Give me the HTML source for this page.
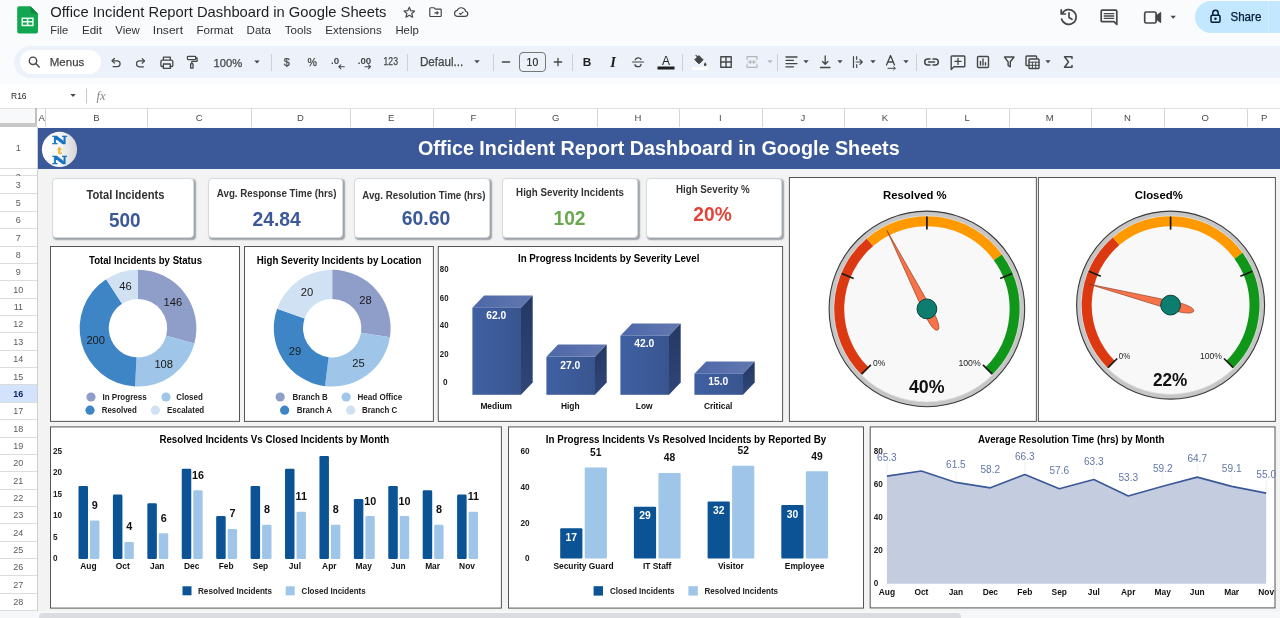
<!DOCTYPE html>
<html lang="en"><head><meta charset="utf-8">
<title>Office Incident Report Dashboard in Google Sheets</title>
<style>
html,body{margin:0;padding:0;}
body{width:1280px;height:618px;overflow:hidden;background:#f9fbfd;font-family:"Liberation Sans",Arial,sans-serif;position:relative;color:#1f1f1f;}
.abs{position:absolute;}
#toolbar{left:14px;top:46px;width:1290px;height:32px;border-radius:16px;background:#edf2fa;}
#menus-pill{left:20px;top:50px;width:81px;height:24px;border-radius:12px;background:#fff;}
.sep{top:54px;width:1px;height:17px;background:#ccd0d6}
#fbar{left:0;top:84px;width:1280px;height:24px;background:#fff;}
#colhdr{left:0;top:108px;width:1280px;height:19px;background:#fff;border-top:1px solid #e1e1e1;box-sizing:border-box}
.ch{top:109px;height:18px;border-right:1px solid #d5d5d5;box-sizing:border-box}
#rowhdr{left:0;top:127px;width:38px;height:491px;background:#fbfbfc;border-right:1px solid #d0d0d0;box-sizing:border-box}
.rh{left:0;width:37px;background:#fff;border-bottom:1px solid #dcdcdc;box-sizing:border-box}
#banner{left:38px;top:127.5px;width:1242px;height:41px;background:#3b5998;}
#sheetbg{left:38px;top:168px;width:1242px;height:443px;background:#f3f3f3}
.kpi{background:#fff;border:1px solid #d3dbe0;border-radius:4px;box-shadow:1.5px 1.5px 1.5px rgba(70,80,90,.5);box-sizing:border-box}
.box{background:#fff;border:1px solid #4a4a4a;box-sizing:border-box}
#hscroll{left:0;top:611px;width:1280px;height:7px;background:#f6f7f8}
#hthumb{left:38.500px;top:613px;width:922px;height:9px;background:#dadce0;border-radius:4px}
svg text{font-family:"Liberation Sans",Arial,sans-serif}
svg text.slab{font-family:"DejaVu Serif","Liberation Serif",serif}
svg text.serif{font-family:"Liberation Serif","DejaVu Serif",serif}
</style></head><body>

<svg class="abs" style="left:17px;top:5.500px" width="22" height="28" viewBox="0 0 22 28">
<path d="M2.200 0.300h11.300l7.500 7.500v17.700a2 2 0 0 1-2 2h-16.800a2 2 0 0 1-2-2v-23.200a2 2 0 0 1 2-2z" fill="#11a650"/>
<path d="M13.500 0.300l7.500 7.500h-5.500a2 2 0 0 1-2-2z" fill="#0c8a40"/>
<path d="M4.500 11.400h12.200v8.900h-12.200z M6 12.900v2.100h3.800v-2.100z M11.400 12.900v2.100h3.800v-2.100z M6 16.500v2.300h3.800v-2.300z M11.400 16.500v2.300h3.800v-2.300z" fill="#e9f7ee" fill-rule="evenodd"/>
</svg>
<svg class="abs" style="left:401px;top:4px" width="70" height="18" viewBox="0 0 70 18" fill="none" stroke="#444746" stroke-width="1.300" stroke-linejoin="round">
<g transform="translate(8.300 8.200) scale(.9) translate(-8.200 -8.200)"><path d="M8.200 2.600l1.700 3.900 4.200.4-3.200 2.800 1 4.100-3.700-2.200-3.700 2.200 1-4.100-3.200-2.800 4.200-.4z"/></g>
<g transform="translate(34.600 8.100) scale(.92 .86) translate(-33.800 -8.500)">
<path d="M28.400 3.500h3.800l1.400 1.500h5.400a.9.900 0 0 1 .9.900v6.800a.9.900 0 0 1-.9.900h-10.600a.9.900 0 0 1-.9-.9v-8.300a.9.900 0 0 1 .9-.9z"/>
<path d="M32.500 9.400h3.600M35 7.700l1.700 1.700-1.700 1.700" stroke-width="1.200"/></g>
<g transform="translate(60.400 8.200) scale(.93 .86) translate(-60.200 -8.400)">
<path d="M55.800 13.200h8.400a3 3 0 0 0 .4-5.950 4.600 4.600 0 0 0-8.900-.95 3.500 3.500 0 0 0 .1 6.900z"/>
<path d="M57.700 9.400l1.600 1.600 3-3.100" stroke-width="1.200"/></g>
</svg>
<svg class="abs" style="left:1055px;top:3px" width="130" height="28" viewBox="0 0 130 28" fill="none" stroke="#444746" stroke-width="1.700" stroke-linecap="round" stroke-linejoin="round">
<path d="M7.200 10.500a7.400 7.400 0 1 1-.6 5.500"/><path d="M6.200 6.800v4.200h4.200" /><path d="M14 9.800v4.700l3 1.800"/>
<path d="M47.200 7.200h13.600a1 1 0 0 1 1 1v13.300l-2.800-2.800h-11.800a1 1 0 0 1-1-1v-9.500a1 1 0 0 1 1-1z" /><path d="M49.200 10.700h9.600M49.200 13h9.600M49.200 15.300h9.600" stroke-width="1.300"/>
<path d="M91.300 9h8.200a1.600 1.600 0 0 1 1.600 1.600v7.800a1.600 1.600 0 0 1-1.600 1.600h-8.200a1.600 1.600 0 0 1-1.600-1.600v-7.800a1.600 1.600 0 0 1 1.600-1.600z"/><path d="M101.300 13l4.300-3.300v9.600l-4.300-3.300z" fill="#444746" stroke-width="1.200"/>
<path d="M115.500 12.800h5.400l-2.700 3z" fill="#444746" stroke="none"/>
</svg>
<div class="abs" style="left:1195px;top:1px;width:120px;height:32px;border-radius:16px;background:#c2e7ff"></div>
<svg class="abs" style="left:1208px;top:8px" width="14" height="17" viewBox="0 0 14 17"><path d="M4.800 7.200v-2.200a2.700 2.700 0 0 1 5.400 0v2.200" fill="none" stroke="#001d35" stroke-width="1.500"/><rect x="3" y="7.200" width="9" height="7" rx="1.200" fill="none" stroke="#001d35" stroke-width="1.500"/><circle cx="7.500" cy="10.700" r="1.200" fill="#001d35"/></svg>
<div class="abs" style="left:1268px;top:1px;width:1px;height:32px;background:#d3edff"></div>

<div id="toolbar" class="abs"></div><div id="menus-pill" class="abs"></div>
<svg class="abs" style="left:0;top:46px" width="1280" height="32" viewBox="0 46 1280 32" fill="none" stroke="#444746" stroke-width="1.400" stroke-linecap="round" stroke-linejoin="round">
<circle cx="33" cy="60.800" r="3.700"/><path d="M35.800 63.600l3.400 3.500"/>
<g transform="translate(116 62.600) scale(.88) translate(-116.300 -62.050)"><path d="M112.300 60h5.300a3.300 3.300 0 0 1 0 6.700h-4.600"/><path d="M114.500 57.400l-2.700 2.600 2.700 2.600"/></g>
<g transform="translate(140.600 62.700) scale(.88) translate(-139.700 -62.050)"><path d="M143.700 60h-5.300a3.300 3.300 0 0 0 0 6.700h4.600" /><path d="M141.500 57.400l2.700 2.600-2.700 2.600"/></g>
<g transform="translate(166.800 62.800) scale(.93) translate(-166.450 -62.400)"><path d="M162.800 59.600v-3.200h7.400v3.200M162.800 66.400h-1.700a1 1 0 0 1-1-1v-4.300a1.500 1.500 0 0 1 1.500-1.500h9.800a1.500 1.500 0 0 1 1.500 1.500v4.300a1 1 0 0 1-1 1h-1.700"/><rect x="162.800" y="63.700" width="7.400" height="4.700"/></g>
<g transform="translate(192.250 62.250) scale(.92) translate(-192.750 -62.300)"><rect x="187.500" y="55.800" width="9" height="3.600" rx=".8"/><path d="M196.500 57.600h1.500v3.700h-5.700v2.500"/><rect x="191" y="63.800" width="2.600" height="5" rx=".6"/></g>
<path d="M254.300 60.600h5.400l-2.700 3z" fill="#444746" stroke="none"/>
<path d="M344.300 66.700h-5.500M340.800 64.800l-2 1.900 2 1.900" stroke-width="1.100"/>
<path d="M365 66.700h5.500M368.500 64.800l2 1.900-2 1.900" stroke-width="1.100"/>
<path d="M474.300 60.300h5.400l-2.700 3z" fill="#444746" stroke="none"/>
<path d="M502.300 62h7.400M554.300 62h7.400M558 58.300v7.400" stroke-width="1.300"/>
<rect x="519.500" y="52.500" width="26" height="19" rx="3.500" stroke="#747775" stroke-width="1"/>
<path d="M632.500 62h11" stroke-width="1.200"/><path d="M641 59.400a3 2.200 0 0 0-5.800.4M635 64.600a3 2.200 0 0 0 6-.3" stroke-width="1.300"/>
<rect x="657.500" y="66.500" width="17" height="3" fill="#1f1f1f" stroke="none"/>
<path d="M695.300 59.200l3.600-3.600 4.200 4.200-3.600 3.600a.8.800 0 0 1-1.100 0l-3.100-3.100a.8.800 0 0 1 0-1.100z" fill="#444746" stroke-width="1"/><path d="M696 55.300l2.800 2.800" stroke-width="1.200"/><path d="M705.200 62.200c.8 1.200 1.300 1.900 1.300 2.600a1.300 1.300 0 0 1-2.600 0c0-.7.500-1.400 1.300-2.600z" fill="#444746" stroke="none"/>
<rect x="692" y="67.200" width="16" height="2.800" fill="#fff" stroke="none"/>
<rect x="720.800" y="56.800" width="10.400" height="10.400"/><path d="M726 56.800v10.400M720.800 62h10.400"/>
<g stroke="#b4b7ba"><path d="M747 59.500v-2.800h10v2.800M747 64.500v2.800h10v-2.800M748 62h3M756 62h-3M750 60.700l1.300 1.300-1.300 1.300M754 60.700l-1.300 1.300 1.300 1.300" stroke-width="1.200"/><path d="M767.300 60.300h5.400l-2.700 3z" fill="#b4b7ba" stroke="none"/></g>
<path d="M786 57h11M786 60.300h7.500M786 63.600h11M786 66.900h7.500" stroke-width="1.300"/><path d="M803.300 60.300h5.400l-2.700 3z" fill="#444746" stroke="none"/>
<path d="M820.500 67.500h9.500M825.200 56v8M822.500 61.500l2.700 2.700 2.700-2.700" stroke-width="1.300"/><path d="M837.300 60.300h5.400l-2.700 3z" fill="#444746" stroke="none"/>
<path d="M853.500 56.500v11M856.700 56.500v3M856.700 64.500v3M856 62h6.300M859.900 59.600l2.400 2.400-2.400 2.400" stroke-width="1.200"/><path d="M870.300 60.300h5.400l-2.700 3z" fill="#444746" stroke="none"/>
<path d="M886.500 65l4-9.500 4 9.500M888 62h5" stroke-width="1.300"/><path d="M888 68.300h7M893.700 66.900l1.600 1.400-1.600 1.400" stroke-width="1"/><path d="M903.300 60.300h5.400l-2.700 3z" fill="#444746" stroke="none"/>
<path d="M930 59h-2.300a3 3 0 0 0 0 6h2.300M933 59h2.300a3 3 0 0 1 0 6h-2.300M928.500 62h6" stroke-width="1.500"/>
<path d="M952 56h12a.8.800 0 0 1 .8.800v9.200a.8.800 0 0 1-.8.800h-10l-2.800 2.700v-12.700a.8.800 0 0 1 .8-.8z"/><path d="M955 61.400h6M958 58.400v6" stroke-width="1.300"/>
<rect x="977.500" y="56.500" width="11" height="11" rx="1"/><path d="M980.500 65v-3.500M983 65v-6M985.500 65v-2.300" stroke-width="1.400"/>
<path d="M1004.500 57h9.500l-3.700 4.800v5l-2.200-1.300v-3.700z"/>
<path d="M1028 65.500h-1.200a.8.800 0 0 1-.8-.8v-7.900a.8.800 0 0 1 .8-.8h9a.8.800 0 0 1 .8.800v1.300"/><rect x="1029" y="59" width="10" height="9.500" rx=".8"/><path d="M1029 62.200h10M1029 65.300h10M1032.400 62.200v6.300M1035.700 62.200v6.300" stroke-width="1"/><path d="M1045.300 60.300h5.400l-2.700 3z" fill="#444746" stroke="none"/>
<path d="M1072 58.500v-1.800h-7.500l4 5.300-4 5.300h7.500v-1.800" stroke-width="1.500"/>
</svg>
<div class="abs sep" style="left:271px"></div>
<div class="abs sep" style="left:407px"></div>
<div class="abs sep" style="left:492.5px"></div>
<div class="abs sep" style="left:572px"></div>
<div class="abs sep" style="left:682px"></div>
<div class="abs sep" style="left:777px"></div>
<div class="abs sep" style="left:916px"></div>
<div id="fbar" class="abs"></div>
<svg class="abs" style="left:60px;top:84px" width="60" height="24" viewBox="60 84 60 24"><path d="M70.300 94h5.400l-2.700 3z" fill="#444746"/><path d="M86.500 88.500v15" stroke="#c7c7c7" stroke-width="1"/></svg>

<div id="colhdr" class="abs"></div>
<div class="abs ch" style="left:37px;width:9.299999999999997px"></div>
<div class="abs ch" style="left:46.3px;width:102.2px"></div>
<div class="abs ch" style="left:148.5px;width:103.5px"></div>
<div class="abs ch" style="left:252px;width:99px"></div>
<div class="abs ch" style="left:351px;width:82.5px"></div>
<div class="abs ch" style="left:433.5px;width:82.0px"></div>
<div class="abs ch" style="left:515.5px;width:82.5px"></div>
<div class="abs ch" style="left:598px;width:82px"></div>
<div class="abs ch" style="left:680px;width:82.5px"></div>
<div class="abs ch" style="left:762.5px;width:82.5px"></div>
<div class="abs ch" style="left:845px;width:82px"></div>
<div class="abs ch" style="left:927px;width:82.5px"></div>
<div class="abs ch" style="left:1009.5px;width:82.5px"></div>
<div class="abs ch" style="left:1092px;width:73px"></div>
<div class="abs ch" style="left:1165px;width:82.5px"></div>
<div class="abs ch" style="left:1247.5px;width:82.5px"></div>
<div class="abs" style="left:0;top:109px;width:37px;height:18px;background:#f8f9fa;border-right:1px solid #d5d5d5;box-sizing:border-box"></div>
<div class="abs" style="left:34.500px;top:108px;width:2.500px;height:19px;background:#c0c0c0"></div><div class="abs" style="left:0;top:123px;width:37px;height:3.700px;background:#c8c8c8"></div>
<div id="rowhdr" class="abs"></div>
<div class="abs rh" style="top:127.00px;height:42.10px;"></div>
<div class="abs rh" style="top:169.10px;height:7.30px;"></div>
<div class="abs rh" style="top:176.40px;height:18.10px;"></div>
<div class="abs rh" style="top:194.50px;height:17.36px;"></div>
<div class="abs rh" style="top:211.86px;height:17.36px;"></div>
<div class="abs rh" style="top:229.22px;height:17.36px;"></div>
<div class="abs rh" style="top:246.58px;height:17.36px;"></div>
<div class="abs rh" style="top:263.94px;height:17.36px;"></div>
<div class="abs rh" style="top:281.30px;height:17.36px;"></div>
<div class="abs rh" style="top:298.66px;height:17.36px;"></div>
<div class="abs rh" style="top:316.02px;height:17.36px;"></div>
<div class="abs rh" style="top:333.38px;height:17.36px;"></div>
<div class="abs rh" style="top:350.74px;height:17.36px;"></div>
<div class="abs rh" style="top:368.10px;height:17.36px;"></div>
<div class="abs rh" style="top:385.46px;height:17.36px;background:#d3e3fd;"></div>
<div class="abs rh" style="top:402.82px;height:17.36px;"></div>
<div class="abs rh" style="top:420.18px;height:17.36px;"></div>
<div class="abs rh" style="top:437.54px;height:17.36px;"></div>
<div class="abs rh" style="top:454.90px;height:17.36px;"></div>
<div class="abs rh" style="top:472.26px;height:17.36px;"></div>
<div class="abs rh" style="top:489.62px;height:17.36px;"></div>
<div class="abs rh" style="top:506.98px;height:17.36px;"></div>
<div class="abs rh" style="top:524.34px;height:17.36px;"></div>
<div class="abs rh" style="top:541.70px;height:17.36px;"></div>
<div class="abs rh" style="top:559.06px;height:17.36px;"></div>
<div class="abs rh" style="top:576.42px;height:17.36px;"></div>
<div class="abs rh" style="top:593.78px;height:17.36px;"></div>
<div id="sheetbg" class="abs"></div><div id="banner" class="abs"></div>
<div class="abs kpi" style="left:51.5px;top:177.5px;width:142.5px;height:60.5px"></div>
<div class="abs kpi" style="left:208.3px;top:177.5px;width:134.7px;height:60.5px"></div>
<div class="abs kpi" style="left:354.3px;top:177.5px;width:136px;height:60.5px"></div>
<div class="abs kpi" style="left:502.2px;top:177.5px;width:135.5px;height:60.5px"></div>
<div class="abs kpi" style="left:646.3px;top:177.5px;width:135.5px;height:60.5px"></div>
<svg class="abs" style="left:0;top:0" width="1280" height="618" viewBox="0 0 1280 618">
<rect x="50.5" y="246.5" width="189.00" height="174.90" fill="#fff" stroke="#555" stroke-width="1"/>
<rect x="244.5" y="246.5" width="188.90" height="174.90" fill="#fff" stroke="#555" stroke-width="1"/>
<rect x="438.3" y="246.5" width="344.30" height="174.90" fill="#fff" stroke="#555" stroke-width="1"/>
<rect x="789.4" y="177.5" width="246.95" height="243.90" fill="#fff" stroke="#555" stroke-width="1"/>
<rect x="1038.4" y="177.5" width="237.00" height="243.90" fill="#fff" stroke="#555" stroke-width="1"/>
<rect x="50.5" y="426.9" width="450.90" height="181.20" fill="#fff" stroke="#555" stroke-width="1"/>
<rect x="508.5" y="426.9" width="355.00" height="181.20" fill="#fff" stroke="#555" stroke-width="1"/>
<rect x="870.2" y="426.9" width="404.80" height="181.00" fill="#fff" stroke="#555" stroke-width="1"/>
</svg>
<svg class="abs" style="left:0;top:0;will-change:transform" width="1280" height="618" viewBox="0 0 1280 618">
<defs><linearGradient id="g3f" x1="0" y1="0" x2="1" y2="0"><stop offset="0" stop-color="#3f60a2"/><stop offset="1" stop-color="#39558f"/></linearGradient><linearGradient id="g3t" x1="0" y1="0" x2="1" y2="0"><stop offset="0" stop-color="#4d68a8"/><stop offset="1" stop-color="#6278b0"/></linearGradient><linearGradient id="g3s" x1="0" y1="0" x2="0" y2="1"><stop offset="0" stop-color="#243863"/><stop offset="1" stop-color="#2f4678"/></linearGradient><linearGradient id="lg" x1="0" y1="0" x2="1" y2="0"><stop offset="0" stop-color="#ffffff"/><stop offset=".5" stop-color="#f6f6f6"/><stop offset="1" stop-color="#d4d4d6"/></linearGradient></defs>
<text x="50.30" y="17.30" font-size="14.8" font-weight="normal" fill="#1f1f1f" text-anchor="start" textLength="336.20" lengthAdjust="spacingAndGlyphs" >Office Incident Report Dashboard in Google Sheets</text>
<text x="50.30" y="33.88" font-size="11.4" font-weight="normal" fill="#303030" text-anchor="start" textLength="17.90" lengthAdjust="spacingAndGlyphs" >File</text>
<text x="81.90" y="33.88" font-size="11.4" font-weight="normal" fill="#303030" text-anchor="start" textLength="20.00" lengthAdjust="spacingAndGlyphs" >Edit</text>
<text x="115.30" y="33.88" font-size="11.4" font-weight="normal" fill="#303030" text-anchor="start" textLength="24.40" lengthAdjust="spacingAndGlyphs" >View</text>
<text x="152.80" y="33.88" font-size="11.4" font-weight="normal" fill="#303030" text-anchor="start" textLength="30.20" lengthAdjust="spacingAndGlyphs" >Insert</text>
<text x="196.40" y="33.88" font-size="11.4" font-weight="normal" fill="#303030" text-anchor="start" textLength="36.80" lengthAdjust="spacingAndGlyphs" >Format</text>
<text x="246.60" y="33.88" font-size="11.4" font-weight="normal" fill="#303030" text-anchor="start" textLength="24.40" lengthAdjust="spacingAndGlyphs" >Data</text>
<text x="284.80" y="33.88" font-size="11.4" font-weight="normal" fill="#303030" text-anchor="start" textLength="27.10" lengthAdjust="spacingAndGlyphs" >Tools</text>
<text x="325.30" y="33.88" font-size="11.4" font-weight="normal" fill="#303030" text-anchor="start" textLength="56.40" lengthAdjust="spacingAndGlyphs" >Extensions</text>
<text x="395.40" y="33.88" font-size="11.4" font-weight="normal" fill="#303030" text-anchor="start" textLength="23.40" lengthAdjust="spacingAndGlyphs" >Help</text>
<text x="1230.40" y="21.17" font-size="12.2" font-weight="normal" fill="#001d35" text-anchor="start" textLength="31.00" lengthAdjust="spacingAndGlyphs" stroke="#001d35" stroke-width=".25">Share</text>
<text x="49.80" y="66.22" font-size="11.8" font-weight="normal" fill="#444746" text-anchor="start" textLength="34.50" lengthAdjust="spacingAndGlyphs" stroke="#444746" stroke-width=".25">Menus</text>
<text x="213.40" y="66.52" font-size="11.8" font-weight="normal" fill="#444746" text-anchor="start" textLength="28.80" lengthAdjust="spacingAndGlyphs" stroke="#444746" stroke-width=".25">100%</text>
<text x="286.70" y="65.87" font-size="10.8" font-weight="normal" fill="#444746" text-anchor="middle" stroke="#444746" stroke-width=".25">$</text>
<text x="312.30" y="65.59" font-size="10.6" font-weight="normal" fill="#444746" text-anchor="middle" stroke="#444746" stroke-width=".25">%</text>
<text x="331.10" y="63.57" font-size="9.4" font-weight="bold" fill="#444746" text-anchor="start" textLength="8.10" lengthAdjust="spacingAndGlyphs" >.0</text>
<text x="357.70" y="63.57" font-size="9.4" font-weight="bold" fill="#444746" text-anchor="start" textLength="13.50" lengthAdjust="spacingAndGlyphs" >.00</text>
<text x="383.60" y="65.45" font-size="10.2" font-weight="normal" fill="#444746" text-anchor="start" textLength="14.30" lengthAdjust="spacingAndGlyphs" stroke="#444746" stroke-width=".25">123</text>
<text x="420.00" y="66.10" font-size="12" font-weight="normal" fill="#444746" text-anchor="start" textLength="43.20" lengthAdjust="spacingAndGlyphs" stroke="#444746" stroke-width=".25">Defaul...</text>
<text x="526.60" y="65.92" font-size="11.5" font-weight="normal" fill="#1f1f1f" text-anchor="start" textLength="11.60" lengthAdjust="spacingAndGlyphs" stroke="#1f1f1f" stroke-width=".2">10</text>
<text x="587.00" y="66.22" font-size="11.8" font-weight="bold" fill="#1f1f1f" text-anchor="middle" >B</text>
<text x="613.00" y="67.19" font-size="14.5" font-weight="bold" fill="#1f1f1f" text-anchor="middle" class="serif" font-style="italic">I</text>
<text x="666.00" y="64.50" font-size="12" font-weight="normal" fill="#1f1f1f" text-anchor="middle" >A</text>
<text x="11.00" y="98.91" font-size="9.8" font-weight="normal" fill="#1f1f1f" text-anchor="start" textLength="15.60" lengthAdjust="spacingAndGlyphs" >R16</text>
<text x="101.00" y="100.07" font-size="12.5" font-weight="normal" fill="#80868b" text-anchor="middle" class="serif" font-style="italic">fx</text>
<text x="41.65" y="121.20" font-size="9.5" font-weight="normal" fill="#4a4a4a" text-anchor="middle" >A</text>
<text x="96.40" y="121.20" font-size="9.5" font-weight="normal" fill="#4a4a4a" text-anchor="middle" >B</text>
<text x="199.25" y="121.20" font-size="9.5" font-weight="normal" fill="#4a4a4a" text-anchor="middle" >C</text>
<text x="300.50" y="121.20" font-size="9.5" font-weight="normal" fill="#4a4a4a" text-anchor="middle" >D</text>
<text x="391.25" y="121.20" font-size="9.5" font-weight="normal" fill="#4a4a4a" text-anchor="middle" >E</text>
<text x="473.50" y="121.20" font-size="9.5" font-weight="normal" fill="#4a4a4a" text-anchor="middle" >F</text>
<text x="555.75" y="121.20" font-size="9.5" font-weight="normal" fill="#4a4a4a" text-anchor="middle" >G</text>
<text x="638.00" y="121.20" font-size="9.5" font-weight="normal" fill="#4a4a4a" text-anchor="middle" >H</text>
<text x="720.25" y="121.20" font-size="9.5" font-weight="normal" fill="#4a4a4a" text-anchor="middle" >I</text>
<text x="802.75" y="121.20" font-size="9.5" font-weight="normal" fill="#4a4a4a" text-anchor="middle" >J</text>
<text x="885.00" y="121.20" font-size="9.5" font-weight="normal" fill="#4a4a4a" text-anchor="middle" >K</text>
<text x="967.25" y="121.20" font-size="9.5" font-weight="normal" fill="#4a4a4a" text-anchor="middle" >L</text>
<text x="1049.75" y="121.20" font-size="9.5" font-weight="normal" fill="#4a4a4a" text-anchor="middle" >M</text>
<text x="1127.50" y="121.20" font-size="9.5" font-weight="normal" fill="#4a4a4a" text-anchor="middle" >N</text>
<text x="1205.25" y="121.20" font-size="9.5" font-weight="normal" fill="#4a4a4a" text-anchor="middle" >O</text>
<text x="1264.25" y="121.20" font-size="9.5" font-weight="normal" fill="#4a4a4a" text-anchor="middle" >P</text>
<text x="18.30" y="151.22" font-size="9" font-weight="normal" fill="#5a5a5a" text-anchor="middle" >1</text>
<svg x="0" y="169.100" width="36" height="6.800" viewBox="0 169.100 36 6.800"><text x="18.30" y="179.62" font-size="9" font-weight="normal" fill="#5a5a5a" text-anchor="middle" >2</text></svg>
<text x="18.30" y="188.17" font-size="9" font-weight="normal" fill="#5a5a5a" text-anchor="middle" >3</text>
<text x="18.30" y="205.90" font-size="9" font-weight="normal" fill="#5a5a5a" text-anchor="middle" >5</text>
<text x="18.30" y="223.26" font-size="9" font-weight="normal" fill="#5a5a5a" text-anchor="middle" >6</text>
<text x="18.30" y="240.62" font-size="9" font-weight="normal" fill="#5a5a5a" text-anchor="middle" >7</text>
<text x="18.30" y="257.98" font-size="9" font-weight="normal" fill="#5a5a5a" text-anchor="middle" >8</text>
<text x="18.30" y="275.34" font-size="9" font-weight="normal" fill="#5a5a5a" text-anchor="middle" >9</text>
<text x="18.30" y="292.70" font-size="9" font-weight="normal" fill="#5a5a5a" text-anchor="middle" >10</text>
<text x="18.30" y="310.06" font-size="9" font-weight="normal" fill="#5a5a5a" text-anchor="middle" >11</text>
<text x="18.30" y="327.42" font-size="9" font-weight="normal" fill="#5a5a5a" text-anchor="middle" >12</text>
<text x="18.30" y="344.78" font-size="9" font-weight="normal" fill="#5a5a5a" text-anchor="middle" >13</text>
<text x="18.30" y="362.14" font-size="9" font-weight="normal" fill="#5a5a5a" text-anchor="middle" >14</text>
<text x="18.30" y="379.50" font-size="9" font-weight="normal" fill="#5a5a5a" text-anchor="middle" >15</text>
<text x="18.30" y="396.86" font-size="9" font-weight="bold" fill="#0b2a66" text-anchor="middle" >16</text>
<text x="18.30" y="414.22" font-size="9" font-weight="normal" fill="#5a5a5a" text-anchor="middle" >17</text>
<text x="18.30" y="431.58" font-size="9" font-weight="normal" fill="#5a5a5a" text-anchor="middle" >18</text>
<text x="18.30" y="448.94" font-size="9" font-weight="normal" fill="#5a5a5a" text-anchor="middle" >19</text>
<text x="18.30" y="466.30" font-size="9" font-weight="normal" fill="#5a5a5a" text-anchor="middle" >20</text>
<text x="18.30" y="483.66" font-size="9" font-weight="normal" fill="#5a5a5a" text-anchor="middle" >21</text>
<text x="18.30" y="501.02" font-size="9" font-weight="normal" fill="#5a5a5a" text-anchor="middle" >22</text>
<text x="18.30" y="518.38" font-size="9" font-weight="normal" fill="#5a5a5a" text-anchor="middle" >23</text>
<text x="18.30" y="535.74" font-size="9" font-weight="normal" fill="#5a5a5a" text-anchor="middle" >24</text>
<text x="18.30" y="553.10" font-size="9" font-weight="normal" fill="#5a5a5a" text-anchor="middle" >25</text>
<text x="18.30" y="570.46" font-size="9" font-weight="normal" fill="#5a5a5a" text-anchor="middle" >26</text>
<text x="18.30" y="587.82" font-size="9" font-weight="normal" fill="#5a5a5a" text-anchor="middle" >27</text>
<text x="18.30" y="605.18" font-size="9" font-weight="normal" fill="#5a5a5a" text-anchor="middle" >28</text>
<text x="417.90" y="155.18" font-size="19.5" font-weight="bold" fill="#fff" text-anchor="start" textLength="481.80" lengthAdjust="spacingAndGlyphs" >Office Incident Report Dashboard in Google Sheets</text>
<circle cx="59.500" cy="149.400" r="17.600" fill="url(#lg)"/>
<text class="slab" x="0" y="0" font-size="10.400" font-weight="bold" fill="#1573c0" stroke="#1573c0" stroke-width=".5" text-anchor="middle" transform="translate(59.600 143.600) scale(1.620 1)">N</text>
<text class="slab" x="0" y="0" font-size="10.400" font-weight="bold" fill="#1573c0" stroke="#1573c0" stroke-width=".5" text-anchor="middle" transform="translate(59.600 163.700) scale(1.620 1)">N</text>
<text class="slab" x="59.700" y="153.600" font-size="9.500" font-weight="bold" fill="#f0b428" stroke="#f0b428" stroke-width=".4" text-anchor="middle">t</text>
<text x="86.40" y="198.60" font-size="12.3" font-weight="bold" fill="#333" text-anchor="start" textLength="78.00" lengthAdjust="spacingAndGlyphs" >Total Incidents</text>
<text x="109.00" y="227.37" font-size="20.3" font-weight="bold" fill="#3b5998" text-anchor="start" textLength="31.60" lengthAdjust="spacingAndGlyphs" >500</text>
<text x="216.80" y="197.26" font-size="10.5" font-weight="bold" fill="#333" text-anchor="start" textLength="119.70" lengthAdjust="spacingAndGlyphs" >Avg. Response Time (hrs)</text>
<text x="252.40" y="225.57" font-size="20.3" font-weight="bold" fill="#3b5998" text-anchor="start" textLength="48.40" lengthAdjust="spacingAndGlyphs" >24.84</text>
<text x="362.30" y="198.96" font-size="10.5" font-weight="bold" fill="#333" text-anchor="start" textLength="123.20" lengthAdjust="spacingAndGlyphs" >Avg. Resolution Time (hrs)</text>
<text x="401.80" y="224.77" font-size="20.3" font-weight="bold" fill="#3b5998" text-anchor="start" textLength="48.50" lengthAdjust="spacingAndGlyphs" >60.60</text>
<text x="516.10" y="196.46" font-size="10.5" font-weight="bold" fill="#333" text-anchor="start" textLength="107.80" lengthAdjust="spacingAndGlyphs" >High Severity Incidents</text>
<text x="553.50" y="224.77" font-size="20.3" font-weight="bold" fill="#6aa84f" text-anchor="start" textLength="32.00" lengthAdjust="spacingAndGlyphs" >102</text>
<text x="676.00" y="193.16" font-size="10.5" font-weight="bold" fill="#333" text-anchor="start" textLength="73.70" lengthAdjust="spacingAndGlyphs" >High Severity %</text>
<text x="693.30" y="221.47" font-size="20.3" font-weight="bold" fill="#e0453a" text-anchor="start" textLength="38.40" lengthAdjust="spacingAndGlyphs" >20%</text>
<text x="89.00" y="263.66" font-size="10.5" font-weight="bold" fill="#000" text-anchor="start" textLength="113.00" lengthAdjust="spacingAndGlyphs" >Total Incidents by Status</text>
<path d="M138.00 269.80A58.4 58.4 0 0 1 194.38 343.43L166.19 335.82A29.2 29.2 0 0 0 138.00 299.00Z" fill="#8f9ec9"/>
<text x="172.78" y="305.58" font-size="11.2" font-weight="normal" fill="#1a1a1a" text-anchor="middle" >146</text>
<path d="M194.38 343.43A58.4 58.4 0 0 1 135.07 386.53L136.53 357.36A29.2 29.2 0 0 0 166.19 335.82Z" fill="#9fc5e8"/>
<text x="163.74" y="367.64" font-size="11.2" font-weight="normal" fill="#1a1a1a" text-anchor="middle" >108</text>
<path d="M135.07 386.53A58.4 58.4 0 0 1 106.09 279.29L122.05 303.74A29.2 29.2 0 0 0 136.53 357.36Z" fill="#3e85c6"/>
<text x="95.72" y="343.63" font-size="11.2" font-weight="normal" fill="#1a1a1a" text-anchor="middle" >200</text>
<path d="M106.09 279.29A58.4 58.4 0 0 1 138.00 269.80L138.00 299.00A29.2 29.2 0 0 0 122.05 303.74Z" fill="#cfe1f3"/>
<text x="125.52" y="290.23" font-size="11.2" font-weight="normal" fill="#1a1a1a" text-anchor="middle" >46</text>
<text x="256.80" y="263.66" font-size="10.5" font-weight="bold" fill="#000" text-anchor="start" textLength="164.70" lengthAdjust="spacingAndGlyphs" >High Severity Incidents by Location</text>
<path d="M332.20 269.80A58.4 58.4 0 0 1 389.91 337.16L361.05 332.68A29.2 29.2 0 0 0 332.20 299.00Z" fill="#8f9ec9"/>
<text x="365.46" y="303.71" font-size="11.2" font-weight="normal" fill="#1a1a1a" text-anchor="middle" >28</text>
<path d="M389.91 337.16A58.4 58.4 0 0 1 325.02 386.16L328.61 357.18A29.2 29.2 0 0 0 361.05 332.68Z" fill="#9fc5e8"/>
<text x="358.60" y="367.16" font-size="11.2" font-weight="normal" fill="#1a1a1a" text-anchor="middle" >25</text>
<path d="M325.02 386.16A58.4 58.4 0 0 1 277.12 308.79L304.66 318.50A29.2 29.2 0 0 0 328.61 357.18Z" fill="#3e85c6"/>
<text x="294.96" y="355.27" font-size="11.2" font-weight="normal" fill="#1a1a1a" text-anchor="middle" >29</text>
<path d="M277.12 308.79A58.4 58.4 0 0 1 332.20 269.80L332.20 299.00A29.2 29.2 0 0 0 304.66 318.50Z" fill="#cfe1f3"/>
<text x="306.89" y="296.46" font-size="11.2" font-weight="normal" fill="#1a1a1a" text-anchor="middle" >20</text>
<circle cx="91.00" cy="397" r="4.600" fill="#8f9ec9"/><text x="102.40" y="400.15" font-size="8.8" font-weight="bold" fill="#222" text-anchor="start" textLength="44.40" lengthAdjust="spacingAndGlyphs" >In Progress</text>
<circle cx="166.00" cy="397" r="4.600" fill="#9fc5e8"/><text x="176.30" y="400.15" font-size="8.8" font-weight="bold" fill="#222" text-anchor="start" textLength="26.50" lengthAdjust="spacingAndGlyphs" >Closed</text>
<circle cx="90.00" cy="410.2" r="4.600" fill="#3e85c6"/><text x="101.70" y="413.35" font-size="8.8" font-weight="bold" fill="#222" text-anchor="start" textLength="35.10" lengthAdjust="spacingAndGlyphs" >Resolved</text>
<circle cx="155.40" cy="410.2" r="4.600" fill="#cfe1f3"/><text x="167.00" y="413.35" font-size="8.8" font-weight="bold" fill="#222" text-anchor="start" textLength="37.20" lengthAdjust="spacingAndGlyphs" >Escalated</text>
<circle cx="280.17" cy="397" r="4.600" fill="#8f9ec9"/><text x="292.54" y="400.15" font-size="8.8" font-weight="bold" fill="#222" text-anchor="start" textLength="35.06" lengthAdjust="spacingAndGlyphs" >Branch B</text>
<circle cx="346.17" cy="397" r="4.600" fill="#9fc5e8"/><text x="357.51" y="400.15" font-size="8.8" font-weight="bold" fill="#222" text-anchor="start" textLength="44.69" lengthAdjust="spacingAndGlyphs" >Head Office</text>
<circle cx="284.63" cy="410.2" r="4.600" fill="#3e85c6"/><text x="296.67" y="413.35" font-size="8.8" font-weight="bold" fill="#222" text-anchor="start" textLength="35.41" lengthAdjust="spacingAndGlyphs" >Branch A</text>
<circle cx="350.64" cy="410.2" r="4.600" fill="#cfe1f3"/><text x="361.98" y="413.35" font-size="8.8" font-weight="bold" fill="#222" text-anchor="start" textLength="35.41" lengthAdjust="spacingAndGlyphs" >Branch C</text>
<text x="518.00" y="262.26" font-size="10.5" font-weight="bold" fill="#000" text-anchor="start" textLength="181.40" lengthAdjust="spacingAndGlyphs" >In Progress Incidents by Severity Level</text>
<text x="439.80" y="272.44" font-size="8.2" font-weight="bold" fill="#222" text-anchor="start" textLength="8.70" lengthAdjust="spacingAndGlyphs" >80</text>
<text x="439.80" y="300.74" font-size="8.2" font-weight="bold" fill="#222" text-anchor="start" textLength="8.70" lengthAdjust="spacingAndGlyphs" >60</text>
<text x="439.80" y="328.14" font-size="8.2" font-weight="bold" fill="#222" text-anchor="start" textLength="8.70" lengthAdjust="spacingAndGlyphs" >40</text>
<text x="439.80" y="356.74" font-size="8.2" font-weight="bold" fill="#222" text-anchor="start" textLength="8.70" lengthAdjust="spacingAndGlyphs" >20</text>
<text x="445.40" y="384.74" font-size="8.2" font-weight="bold" fill="#222" text-anchor="middle" >0</text>
<path d="M472.40 307.69L484.10 295.39L532.70 295.39L521.00 307.69Z" fill="url(#g3t)"/>
<path d="M521.00 307.69L532.70 295.39L532.70 382.50L521.00 394.80Z" fill="url(#g3s)"/>
<rect x="472.40" y="307.69" width="48.6" height="87.11" fill="url(#g3f)"/>
<text x="496.20" y="319.38" font-size="10.3" font-weight="bold" fill="#fff" text-anchor="middle" >62.0</text>
<text x="496.20" y="408.81" font-size="8.4" font-weight="bold" fill="#111" text-anchor="middle" >Medium</text>
<path d="M546.40 356.87L558.10 344.56L606.70 344.56L595.00 356.87Z" fill="url(#g3t)"/>
<path d="M595.00 356.87L606.70 344.56L606.70 382.50L595.00 394.80Z" fill="url(#g3s)"/>
<rect x="546.40" y="356.87" width="48.6" height="37.94" fill="url(#g3f)"/>
<text x="570.20" y="368.55" font-size="10.3" font-weight="bold" fill="#fff" text-anchor="middle" >27.0</text>
<text x="570.20" y="408.81" font-size="8.4" font-weight="bold" fill="#111" text-anchor="middle" >High</text>
<path d="M620.40 335.79L632.10 323.49L680.70 323.49L669.00 335.79Z" fill="url(#g3t)"/>
<path d="M669.00 335.79L680.70 323.49L680.70 382.50L669.00 394.80Z" fill="url(#g3s)"/>
<rect x="620.40" y="335.79" width="48.6" height="59.01" fill="url(#g3f)"/>
<text x="644.20" y="347.48" font-size="10.3" font-weight="bold" fill="#fff" text-anchor="middle" >42.0</text>
<text x="644.20" y="408.81" font-size="8.4" font-weight="bold" fill="#111" text-anchor="middle" >Low</text>
<path d="M694.40 373.73L706.10 361.43L754.70 361.43L743.00 373.73Z" fill="url(#g3t)"/>
<path d="M743.00 373.73L754.70 361.43L754.70 382.50L743.00 394.80Z" fill="url(#g3s)"/>
<rect x="694.40" y="373.73" width="48.6" height="21.07" fill="url(#g3f)"/>
<text x="718.20" y="385.41" font-size="10.3" font-weight="bold" fill="#fff" text-anchor="middle" >15.0</text>
<text x="718.20" y="408.81" font-size="8.4" font-weight="bold" fill="#111" text-anchor="middle" >Critical</text>
<text x="883.10" y="198.62" font-size="11.8" font-weight="bold" fill="#000" text-anchor="start" textLength="63.60" lengthAdjust="spacingAndGlyphs" >Resolved %</text>
<circle cx="926.9" cy="308.9" r="97.8" fill="#c6c6c6" stroke="#3a3a3a" stroke-width="1.100"/>
<circle cx="926.9" cy="308.9" r="93.0" fill="#f8f8f8" stroke="#e0e0e0" stroke-width=".8"/>
<path d="M864.89 370.91A87.70 87.70 0 0 1 869.94 242.21" fill="none" stroke="#dc3912" stroke-width="10.00"/>
<path d="M869.94 242.21A87.70 87.70 0 0 1 997.85 257.35" fill="none" stroke="#ff9900" stroke-width="10.00"/>
<path d="M997.85 257.35A87.70 87.70 0 0 1 988.91 370.91" fill="none" stroke="#109618" stroke-width="10.00"/>
<path d="M861.63 374.17L870.83 364.97" stroke="#1a1a1a" stroke-width="1.700"/>
<path d="M841.63 273.58L853.64 278.55" stroke="#1a1a1a" stroke-width="1.700"/>
<path d="M926.90 216.60L926.90 229.60" stroke="#1a1a1a" stroke-width="1.700"/>
<path d="M1012.17 273.58L1000.16 278.55" stroke="#1a1a1a" stroke-width="1.700"/>
<path d="M992.17 374.17L982.97 364.97" stroke="#1a1a1a" stroke-width="1.700"/>
<g transform="translate(926.9 308.9) rotate(-27.00)"><path d="M0 -87.98L4.300 2C5 14 3.400 23.800 0 23.800C-3.400 23.800 -5 14 -4.300 2Z" fill="#f9734a" stroke="#8a3a1e" stroke-width=".6" stroke-linejoin="round"/></g>
<circle cx="926.9" cy="308.9" r="9.900" fill="#0c7d6f" stroke="#0a4039" stroke-width="1"/>
<text x="873.00" y="365.55" font-size="8.8" font-weight="normal" fill="#222" text-anchor="start" textLength="12.30" lengthAdjust="spacingAndGlyphs" >0%</text>
<text x="958.40" y="365.55" font-size="8.8" font-weight="normal" fill="#222" text-anchor="start" textLength="22.30" lengthAdjust="spacingAndGlyphs" >100%</text>
<text x="908.90" y="393.00" font-size="17.6" font-weight="bold" fill="#111" text-anchor="start" textLength="35.60" lengthAdjust="spacingAndGlyphs" >40%</text>
<text x="1134.80" y="198.62" font-size="11.8" font-weight="bold" fill="#000" text-anchor="start" textLength="48.00" lengthAdjust="spacingAndGlyphs" >Closed%</text>
<circle cx="1170.6" cy="305.1" r="94.0" fill="#c6c6c6" stroke="#3a3a3a" stroke-width="1.100"/>
<circle cx="1170.6" cy="305.1" r="89.2" fill="#f8f8f8" stroke="#e0e0e0" stroke-width=".8"/>
<path d="M1111.27 364.43A83.90 83.90 0 0 1 1116.11 241.30" fill="none" stroke="#dc3912" stroke-width="10.00"/>
<path d="M1116.11 241.30A83.90 83.90 0 0 1 1238.48 255.78" fill="none" stroke="#ff9900" stroke-width="10.00"/>
<path d="M1238.48 255.78A83.90 83.90 0 0 1 1229.93 364.43" fill="none" stroke="#109618" stroke-width="10.00"/>
<path d="M1108.02 367.68L1117.21 358.49" stroke="#1a1a1a" stroke-width="1.700"/>
<path d="M1088.84 271.23L1100.85 276.21" stroke="#1a1a1a" stroke-width="1.700"/>
<path d="M1170.60 216.60L1170.60 229.60" stroke="#1a1a1a" stroke-width="1.700"/>
<path d="M1252.36 271.23L1240.35 276.21" stroke="#1a1a1a" stroke-width="1.700"/>
<path d="M1233.18 367.68L1223.99 358.49" stroke="#1a1a1a" stroke-width="1.700"/>
<g transform="translate(1170.6 305.1) rotate(-75.60)"><path d="M0 -84.58L4.300 2C5 14 3.400 23.800 0 23.800C-3.400 23.800 -5 14 -4.300 2Z" fill="#f9734a" stroke="#8a3a1e" stroke-width=".6" stroke-linejoin="round"/></g>
<circle cx="1170.6" cy="305.1" r="9.900" fill="#0c7d6f" stroke="#0a4039" stroke-width="1"/>
<text x="1118.80" y="359.15" font-size="8.8" font-weight="normal" fill="#222" text-anchor="start" textLength="11.40" lengthAdjust="spacingAndGlyphs" >0%</text>
<text x="1200.00" y="359.15" font-size="8.8" font-weight="normal" fill="#222" text-anchor="start" textLength="22.00" lengthAdjust="spacingAndGlyphs" >100%</text>
<text x="1153.00" y="385.50" font-size="17.6" font-weight="bold" fill="#111" text-anchor="start" textLength="34.40" lengthAdjust="spacingAndGlyphs" >22%</text>
<text x="159.40" y="443.06" font-size="10.5" font-weight="bold" fill="#000" text-anchor="start" textLength="229.90" lengthAdjust="spacingAndGlyphs" >Resolved Incidents Vs Closed Incidents by Month</text>
<text x="53.00" y="561.24" font-size="8.2" font-weight="bold" fill="#222" text-anchor="start" >0</text>
<text x="53.00" y="539.80" font-size="8.2" font-weight="bold" fill="#222" text-anchor="start" >5</text>
<text x="53.00" y="518.36" font-size="8.2" font-weight="bold" fill="#222" text-anchor="start" >10</text>
<text x="53.00" y="496.92" font-size="8.2" font-weight="bold" fill="#222" text-anchor="start" >15</text>
<text x="53.00" y="475.48" font-size="8.2" font-weight="bold" fill="#222" text-anchor="start" >20</text>
<text x="53.00" y="454.04" font-size="8.2" font-weight="bold" fill="#222" text-anchor="start" >25</text>
<rect x="78.50" y="486.00" width="9.500" height="73.10" fill="#0b5394" rx="1.300"/>
<rect x="90.00" y="520.40" width="9.400" height="38.70" fill="#9fc5e8" rx="1.300"/>
<text x="94.80" y="508.87" font-size="10.8" font-weight="bold" fill="#111" text-anchor="middle" >9</text>
<text x="88.40" y="569.21" font-size="8.4" font-weight="bold" fill="#111" text-anchor="middle" >Aug</text>
<rect x="112.92" y="494.60" width="9.500" height="64.50" fill="#0b5394" rx="1.300"/>
<rect x="124.42" y="541.90" width="9.400" height="17.20" fill="#9fc5e8" rx="1.300"/>
<text x="129.22" y="530.37" font-size="10.8" font-weight="bold" fill="#111" text-anchor="middle" >4</text>
<text x="122.82" y="569.21" font-size="8.4" font-weight="bold" fill="#111" text-anchor="middle" >Oct</text>
<rect x="147.34" y="503.20" width="9.500" height="55.90" fill="#0b5394" rx="1.300"/>
<rect x="158.84" y="533.30" width="9.400" height="25.80" fill="#9fc5e8" rx="1.300"/>
<text x="163.64" y="521.77" font-size="10.8" font-weight="bold" fill="#111" text-anchor="middle" >6</text>
<text x="157.24" y="569.21" font-size="8.4" font-weight="bold" fill="#111" text-anchor="middle" >Jan</text>
<rect x="181.76" y="468.80" width="9.500" height="90.30" fill="#0b5394" rx="1.300"/>
<rect x="193.26" y="490.30" width="9.400" height="68.80" fill="#9fc5e8" rx="1.300"/>
<text x="198.06" y="478.77" font-size="10.8" font-weight="bold" fill="#111" text-anchor="middle" >16</text>
<text x="191.66" y="569.21" font-size="8.4" font-weight="bold" fill="#111" text-anchor="middle" >Dec</text>
<rect x="216.18" y="516.10" width="9.500" height="43.00" fill="#0b5394" rx="1.300"/>
<rect x="227.68" y="529.00" width="9.400" height="30.10" fill="#9fc5e8" rx="1.300"/>
<text x="232.48" y="517.47" font-size="10.8" font-weight="bold" fill="#111" text-anchor="middle" >7</text>
<text x="226.08" y="569.21" font-size="8.4" font-weight="bold" fill="#111" text-anchor="middle" >Feb</text>
<rect x="250.60" y="486.00" width="9.500" height="73.10" fill="#0b5394" rx="1.300"/>
<rect x="262.10" y="524.70" width="9.400" height="34.40" fill="#9fc5e8" rx="1.300"/>
<text x="266.90" y="513.17" font-size="10.8" font-weight="bold" fill="#111" text-anchor="middle" >8</text>
<text x="260.50" y="569.21" font-size="8.4" font-weight="bold" fill="#111" text-anchor="middle" >Sep</text>
<rect x="285.02" y="468.80" width="9.500" height="90.30" fill="#0b5394" rx="1.300"/>
<rect x="296.52" y="511.80" width="9.400" height="47.30" fill="#9fc5e8" rx="1.300"/>
<text x="301.32" y="500.27" font-size="10.8" font-weight="bold" fill="#111" text-anchor="middle" >11</text>
<text x="294.92" y="569.21" font-size="8.4" font-weight="bold" fill="#111" text-anchor="middle" >Jul</text>
<rect x="319.44" y="455.90" width="9.500" height="103.20" fill="#0b5394" rx="1.300"/>
<rect x="330.94" y="524.70" width="9.400" height="34.40" fill="#9fc5e8" rx="1.300"/>
<text x="335.74" y="513.17" font-size="10.8" font-weight="bold" fill="#111" text-anchor="middle" >8</text>
<text x="329.34" y="569.21" font-size="8.4" font-weight="bold" fill="#111" text-anchor="middle" >Apr</text>
<rect x="353.86" y="498.90" width="9.500" height="60.20" fill="#0b5394" rx="1.300"/>
<rect x="365.36" y="516.10" width="9.400" height="43.00" fill="#9fc5e8" rx="1.300"/>
<text x="370.16" y="504.57" font-size="10.8" font-weight="bold" fill="#111" text-anchor="middle" >10</text>
<text x="363.76" y="569.21" font-size="8.4" font-weight="bold" fill="#111" text-anchor="middle" >May</text>
<rect x="388.28" y="486.00" width="9.500" height="73.10" fill="#0b5394" rx="1.300"/>
<rect x="399.78" y="516.10" width="9.400" height="43.00" fill="#9fc5e8" rx="1.300"/>
<text x="404.58" y="504.57" font-size="10.8" font-weight="bold" fill="#111" text-anchor="middle" >10</text>
<text x="398.18" y="569.21" font-size="8.4" font-weight="bold" fill="#111" text-anchor="middle" >Jun</text>
<rect x="422.70" y="490.30" width="9.500" height="68.80" fill="#0b5394" rx="1.300"/>
<rect x="434.20" y="524.70" width="9.400" height="34.40" fill="#9fc5e8" rx="1.300"/>
<text x="439.00" y="513.17" font-size="10.8" font-weight="bold" fill="#111" text-anchor="middle" >8</text>
<text x="432.60" y="569.21" font-size="8.4" font-weight="bold" fill="#111" text-anchor="middle" >Mar</text>
<rect x="457.12" y="494.60" width="9.500" height="64.50" fill="#0b5394" rx="1.300"/>
<rect x="468.62" y="511.80" width="9.400" height="47.30" fill="#9fc5e8" rx="1.300"/>
<text x="473.42" y="500.27" font-size="10.8" font-weight="bold" fill="#111" text-anchor="middle" >11</text>
<text x="467.02" y="569.21" font-size="8.4" font-weight="bold" fill="#111" text-anchor="middle" >Nov</text>
<rect x="182.500" y="586.300" width="9" height="9" fill="#0b5394"/><text x="198.00" y="593.71" font-size="8.4" font-weight="bold" fill="#222" text-anchor="start" textLength="74.10" lengthAdjust="spacingAndGlyphs" >Resolved Incidents</text>
<rect x="285.700" y="586.300" width="9" height="9" fill="#9fc5e8"/><text x="301.60" y="593.71" font-size="8.4" font-weight="bold" fill="#222" text-anchor="start" textLength="64.10" lengthAdjust="spacingAndGlyphs" >Closed Incidents</text>
<text x="545.80" y="443.26" font-size="10.5" font-weight="bold" fill="#000" text-anchor="start" textLength="280.40" lengthAdjust="spacingAndGlyphs" >In Progress Incidents Vs Resolved Incidents by Reported By</text>
<text x="529.50" y="561.44" font-size="8.2" font-weight="bold" fill="#222" text-anchor="end" >0</text>
<text x="529.50" y="525.78" font-size="8.2" font-weight="bold" fill="#222" text-anchor="end" >20</text>
<text x="529.50" y="490.12" font-size="8.2" font-weight="bold" fill="#222" text-anchor="end" >40</text>
<text x="529.50" y="454.46" font-size="8.2" font-weight="bold" fill="#222" text-anchor="end" >60</text>
<rect x="560.20" y="528.19" width="22.200" height="30.31" fill="#0b5394" rx="1"/>
<rect x="584.70" y="467.57" width="22.200" height="90.93" fill="#9fc5e8" rx="1"/>
<text x="571.30" y="540.78" font-size="10.3" font-weight="bold" fill="#fff" text-anchor="middle" >17</text>
<text x="595.80" y="455.95" font-size="10.3" font-weight="bold" fill="#111" text-anchor="middle" >51</text>
<text x="583.50" y="569.41" font-size="8.4" font-weight="bold" fill="#111" text-anchor="middle" >Security Guard</text>
<rect x="633.90" y="506.79" width="22.200" height="51.71" fill="#0b5394" rx="1"/>
<rect x="658.40" y="472.92" width="22.200" height="85.58" fill="#9fc5e8" rx="1"/>
<text x="645.00" y="519.38" font-size="10.3" font-weight="bold" fill="#fff" text-anchor="middle" >29</text>
<text x="669.50" y="461.30" font-size="10.3" font-weight="bold" fill="#111" text-anchor="middle" >48</text>
<text x="657.20" y="569.41" font-size="8.4" font-weight="bold" fill="#111" text-anchor="middle" >IT Staff</text>
<rect x="707.60" y="501.44" width="22.200" height="57.06" fill="#0b5394" rx="1"/>
<rect x="732.10" y="465.78" width="22.200" height="92.72" fill="#9fc5e8" rx="1"/>
<text x="718.70" y="514.03" font-size="10.3" font-weight="bold" fill="#fff" text-anchor="middle" >32</text>
<text x="743.20" y="454.17" font-size="10.3" font-weight="bold" fill="#111" text-anchor="middle" >52</text>
<text x="730.90" y="569.41" font-size="8.4" font-weight="bold" fill="#111" text-anchor="middle" >Visitor</text>
<rect x="781.30" y="505.01" width="22.200" height="53.49" fill="#0b5394" rx="1"/>
<rect x="805.80" y="471.13" width="22.200" height="87.37" fill="#9fc5e8" rx="1"/>
<text x="792.40" y="517.60" font-size="10.3" font-weight="bold" fill="#fff" text-anchor="middle" >30</text>
<text x="816.90" y="459.52" font-size="10.3" font-weight="bold" fill="#111" text-anchor="middle" >49</text>
<text x="804.60" y="569.41" font-size="8.4" font-weight="bold" fill="#111" text-anchor="middle" >Employee</text>
<rect x="593.600" y="586.200" width="9.400" height="9.400" fill="#0b5394"/><text x="609.90" y="593.71" font-size="8.4" font-weight="bold" fill="#222" text-anchor="start" textLength="64.70" lengthAdjust="spacingAndGlyphs" >Closed Incidents</text>
<rect x="688.400" y="586.200" width="9.400" height="9.400" fill="#9fc5e8"/><text x="704.40" y="593.71" font-size="8.4" font-weight="bold" fill="#222" text-anchor="start" textLength="73.70" lengthAdjust="spacingAndGlyphs" >Resolved Incidents</text>
<text x="978.10" y="443.16" font-size="10.5" font-weight="bold" fill="#000" text-anchor="start" textLength="186.40" lengthAdjust="spacingAndGlyphs" >Average Resolution Time (hrs) by Month</text>
<text x="873.80" y="586.04" font-size="8.2" font-weight="bold" fill="#222" text-anchor="start" >0</text>
<text x="873.80" y="553.10" font-size="8.2" font-weight="bold" fill="#222" text-anchor="start" >20</text>
<text x="873.80" y="520.16" font-size="8.2" font-weight="bold" fill="#222" text-anchor="start" >40</text>
<text x="873.80" y="487.22" font-size="8.2" font-weight="bold" fill="#222" text-anchor="start" >60</text>
<text x="873.80" y="454.28" font-size="8.2" font-weight="bold" fill="#222" text-anchor="start" >80</text>
<polygon points="886.90,583.7 886.90,476.15 921.38,471.05 955.86,482.41 990.34,487.84 1024.82,474.50 1059.30,488.83 1093.78,479.44 1128.26,495.91 1162.74,486.20 1197.22,477.14 1231.70,486.36 1266.18,493.12 1266.18,583.7" fill="#c4cde0"/>
<path d="M886.90 473.15V463.15" stroke="#e9ecf2" stroke-width=".8"/>
<text x="886.90" y="461.47" font-size="10.1" font-weight="normal" fill="#6377a8" text-anchor="middle" >65.3</text>
<text x="886.90" y="595.21" font-size="8.4" font-weight="bold" fill="#111" text-anchor="middle" >Aug</text>
<text x="921.38" y="595.21" font-size="8.4" font-weight="bold" fill="#111" text-anchor="middle" >Oct</text>
<path d="M955.86 479.41V469.41" stroke="#e9ecf2" stroke-width=".8"/>
<text x="955.86" y="467.73" font-size="10.1" font-weight="normal" fill="#6377a8" text-anchor="middle" >61.5</text>
<text x="955.86" y="595.21" font-size="8.4" font-weight="bold" fill="#111" text-anchor="middle" >Jan</text>
<path d="M990.34 484.84V474.84" stroke="#e9ecf2" stroke-width=".8"/>
<text x="990.34" y="473.16" font-size="10.1" font-weight="normal" fill="#6377a8" text-anchor="middle" >58.2</text>
<text x="990.34" y="595.21" font-size="8.4" font-weight="bold" fill="#111" text-anchor="middle" >Dec</text>
<path d="M1024.82 471.50V461.50" stroke="#e9ecf2" stroke-width=".8"/>
<text x="1024.82" y="459.82" font-size="10.1" font-weight="normal" fill="#6377a8" text-anchor="middle" >66.3</text>
<text x="1024.82" y="595.21" font-size="8.4" font-weight="bold" fill="#111" text-anchor="middle" >Feb</text>
<path d="M1059.30 485.83V475.83" stroke="#e9ecf2" stroke-width=".8"/>
<text x="1059.30" y="474.15" font-size="10.1" font-weight="normal" fill="#6377a8" text-anchor="middle" >57.6</text>
<text x="1059.30" y="595.21" font-size="8.4" font-weight="bold" fill="#111" text-anchor="middle" >Sep</text>
<path d="M1093.78 476.44V466.44" stroke="#e9ecf2" stroke-width=".8"/>
<text x="1093.78" y="464.76" font-size="10.1" font-weight="normal" fill="#6377a8" text-anchor="middle" >63.3</text>
<text x="1093.78" y="595.21" font-size="8.4" font-weight="bold" fill="#111" text-anchor="middle" >Jul</text>
<path d="M1128.26 492.91V482.91" stroke="#e9ecf2" stroke-width=".8"/>
<text x="1128.26" y="481.23" font-size="10.1" font-weight="normal" fill="#6377a8" text-anchor="middle" >53.3</text>
<text x="1128.26" y="595.21" font-size="8.4" font-weight="bold" fill="#111" text-anchor="middle" >Apr</text>
<path d="M1162.74 483.20V473.20" stroke="#e9ecf2" stroke-width=".8"/>
<text x="1162.74" y="471.51" font-size="10.1" font-weight="normal" fill="#6377a8" text-anchor="middle" >59.2</text>
<text x="1162.74" y="595.21" font-size="8.4" font-weight="bold" fill="#111" text-anchor="middle" >May</text>
<path d="M1197.22 474.14V464.14" stroke="#e9ecf2" stroke-width=".8"/>
<text x="1197.22" y="462.45" font-size="10.1" font-weight="normal" fill="#6377a8" text-anchor="middle" >64.7</text>
<text x="1197.22" y="595.21" font-size="8.4" font-weight="bold" fill="#111" text-anchor="middle" >Jun</text>
<path d="M1231.70 483.36V473.36" stroke="#e9ecf2" stroke-width=".8"/>
<text x="1231.70" y="471.68" font-size="10.1" font-weight="normal" fill="#6377a8" text-anchor="middle" >59.1</text>
<text x="1231.70" y="595.21" font-size="8.4" font-weight="bold" fill="#111" text-anchor="middle" >Mar</text>
<path d="M1266.18 490.12V480.12" stroke="#e9ecf2" stroke-width=".8"/>
<text x="1266.18" y="478.43" font-size="10.1" font-weight="normal" fill="#6377a8" text-anchor="middle" >55.0</text>
<text x="1266.18" y="595.21" font-size="8.4" font-weight="bold" fill="#111" text-anchor="middle" >Nov</text>
<polyline points="886.90,476.15 921.38,471.05 955.86,482.41 990.34,487.84 1024.82,474.50 1059.30,488.83 1093.78,479.44 1128.26,495.91 1162.74,486.20 1197.22,477.14 1231.70,486.36 1266.18,493.12" fill="none" stroke="#3b5998" stroke-width="1.600" stroke-linejoin="round"/>
</svg>
<div id="hscroll" class="abs"></div><div id="hthumb" class="abs"></div>
</body></html>
